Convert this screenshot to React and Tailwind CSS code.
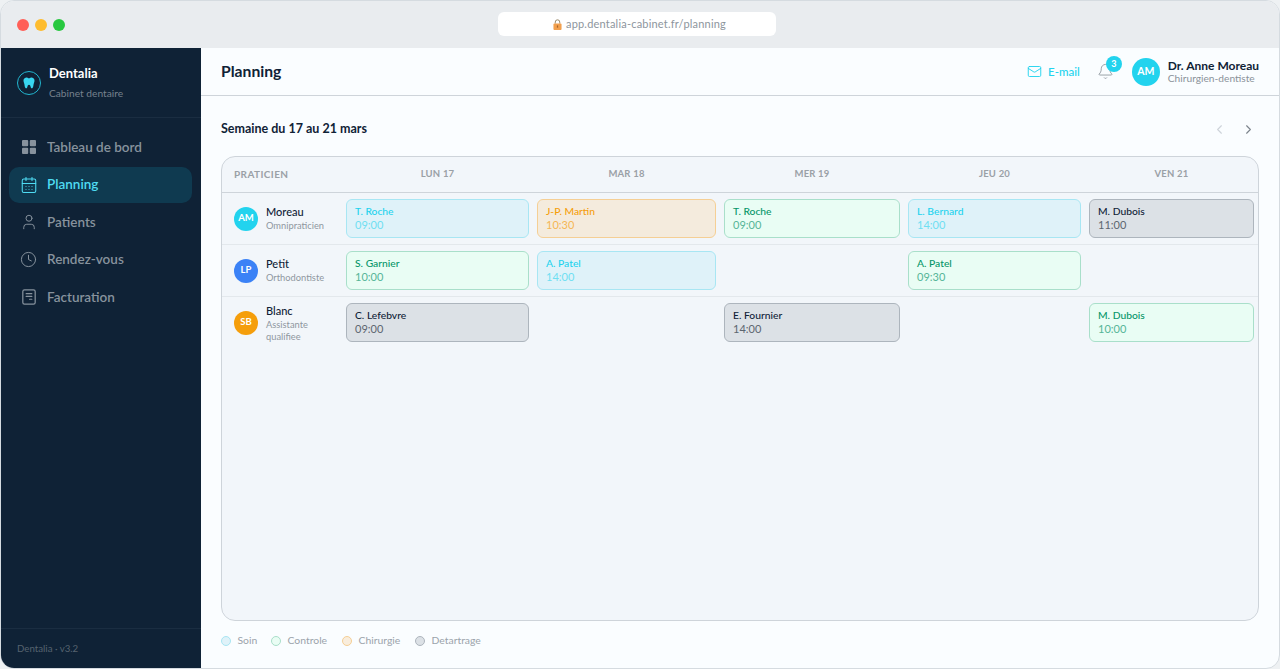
import React from "react";
import { Mail, Bell, ChevronLeft, ChevronRight, User, Clock, CalendarDays } from "lucide-react";

const F = { fontFamily: '"Lato", "Noto Sans", sans-serif' };

const styles = {
  soin: { box: "bg-[#dff2f9] border-[#a8e6f3]", name: "text-[#22d3ee]", time: "text-[#6fdff2]" },
  ctrl: { box: "bg-[#e9fdf4] border-[#a9dfca]", name: "text-[#059669]", time: "text-[#56b598]" },
  chir: { box: "bg-[#f4ebdd] border-[#f5cf95]", name: "text-[#f59e0b]", time: "text-[#f4b654]" },
  det: { box: "bg-[#dce1e6] border-[#adb5bd]", name: "text-[#0f2236]", time: "text-[#5c6670]" },
};

const rows = [
  {
    initials: "AM", color: "bg-[#22d3ee]", name: "Moreau", role: ["Omnipraticien"], text: "",
    cells: [["soin", "T. Roche", "09:00"], ["chir", "J-P. Martin", "10:30"], ["ctrl", "T. Roche", "09:00"], ["soin", "L. Bernard", "14:00"], ["det", "M. Dubois", "11:00"]],
  },
  {
    initials: "LP", color: "bg-[#3b82f6]", name: "Petit", role: ["Orthodontiste"], text: "",
    cells: [["ctrl", "S. Garnier", "10:00"], ["soin", "A. Patel", "14:00"], null, ["ctrl", "A. Patel", "09:30"], null],
  },
  {
    initials: "SB", color: "bg-[#f59e0b]", name: "Blanc", role: ["Assistante", "qualifiee"], text: "pt-[2px]",
    cells: [["det", "C. Lefebvre", "09:00"], null, ["det", "E. Fournier", "14:00"], null, ["ctrl", "M. Dubois", "10:00"]],
  },
];

const grid = "grid grid-cols-[120px_191px_187px_184px_181px_173px]";

function Tooth({ className }) {
  return (
    <svg viewBox="0 0 24 24" className={className} fill="currentColor">
      <path d="M12 5.2C10.4 4.2 8.6 3.6 6.9 4 4.6 4.6 3.4 6.8 3.800 9.4c.3 1.7 1 3 1.3 4.6.3 1.900.5 4.800 2 5.800 1.700.9 2.300-1.400 2.700-3 .3-1.200.7-2.300 2.200-2.300s1.900 1.100 2.200 2.300c.4 1.600 1 3.900 2.700 3 1.500-1 1.700-3.900 2-5.800.3-1.600 1-2.900 1.300-4.600.4-2.600-.8-4.800-3.100-5.400-1.700-.4-3.500.2-5.100 1.200z" />
    </svg>
  );
}

function Grid4({ className }) {
  return (
    <svg viewBox="0 0 14 14" className={className} fill="currentColor">
      <rect x="0" y="0" width="6.2" height="6.2" rx="1" />
      <rect x="7.8" y="0" width="6.2" height="6.2" rx="1" />
      <rect x="0" y="7.800" width="6.2" height="6.2" rx="1" />
      <rect x="7.800" y="7.800" width="6.2" height="6.2" rx="1" />
    </svg>
  );
}

function Bill({ className }) {
  return (
    <svg viewBox="0 0 16 16" className={className} fill="none" stroke="currentColor" strokeWidth="1.100" strokeLinecap="round">
      <rect x="2.500" y="1.700" width="11" height="12.600" rx="1.500" />
      <path d="M5.500 5h5M5.500 7.500h5M8.500 10h2" />
    </svg>
  );
}

function Lock() {
  return (
    <svg viewBox="0 0 10 12" className="w-[9px] h-[11px]">
      <path d="M2.500 5V3.300a2.500 2.500 0 0 1 5 0V5" fill="none" stroke="#9a8a6a" strokeWidth="1.100" />
      <rect x="0.500" y="5" width="9" height="7" rx="1" fill="#f2a04e" />
      <rect x="4.300" y="7" width="1.400" height="2.500" fill="#a8642a" />
    </svg>
  );
}

function NavItem({ icon, label, active }) {
  return (
    <div className={`flex items-center gap-[11px] h-9 px-3 rounded-[10px] text-[13.5px] font-semibold ${active ? "bg-[#0f3a50] text-[#4fdcf3]" : "text-[#87929d]"}`}>
      <span className="w-[15px] shrink-0 flex justify-center">{icon}</span>
      <span>{label}</span>
    </div>
  );
}

function Card({ data }) {
  if (!data) return <div />;
  const s = styles[data[0]];
  return (
    <div className={`h-[39px] border rounded-[6px] pl-2 pt-[4px] leading-[13px] ${s.box}`}>
      <div className={`text-[10.3px] font-medium leading-[14px] ${s.name}`}>{data[1]}</div>
      <div className={`text-[11px] leading-[13px] ${s.time}`}>{data[2]}</div>
    </div>
  );
}

function Legend({ box, label }) {
  return (
    <div className="flex items-center gap-[6.5px]">
      <span className={`w-[10px] h-[10px] shrink-0 rounded-full border ${box}`} />
      <span className="text-[10.4px] text-[#9aa3ab]">{label}</span>
    </div>
  );
}

export default function App() {
  return (
    <div className="w-[1280px] h-[669px] overflow-hidden bg-[#eef1f3]" style={F}>
      <div className="w-full h-full flex flex-col rounded-[14px] border border-[#d5dbe0] overflow-hidden bg-[#fafdff]">
        <div className="relative h-[47px] shrink-0 bg-[#e9ecef] flex items-center px-4 gap-[6px]">
          <span className="w-3 h-3 rounded-full bg-[#ff5f57]" />
          <span className="w-3 h-3 rounded-full bg-[#febc2e]" />
          <span className="w-3 h-3 rounded-full bg-[#28c840]" />
          <div className="absolute left-[497px] top-[11px] w-[278px] h-6 pl-[5px] rounded-[6px] bg-white flex items-center justify-center gap-[4px] text-[11px] tracking-[0.2px] text-[#8d959d]">
            <Lock />
            <span>app.dentalia-cabinet.fr/planning</span>
          </div>
        </div>
        <div className="flex flex-1 min-h-0">
          <aside className="w-[200px] shrink-0 bg-[#0f2236] flex flex-col">
            <div className="h-[70px] border-b border-[#1a2d41] flex items-center px-4 gap-[8px]">
              <div className="w-6 h-6 rounded-full border border-[#22b6cf] flex items-center justify-center text-[#38d6f0]">
                <Tooth className="w-4 h-4" />
              </div>
              <div className="pb-[1px]">
                <div className="text-[13px] leading-[16px] font-bold text-white">Dentalia</div>
                <div className="text-[10.2px] leading-[14px] mt-[5px] text-[#76818d]">Cabinet dentaire</div>
              </div>
            </div>
            <nav className="flex flex-col gap-[1.500px] pl-2 pr-[9px] pt-[11px] flex-1">
              <NavItem icon={<Grid4 className="w-[14px] h-[14px] shrink-0" />} label="Tableau de bord" />
              <NavItem active icon={<CalendarDays className="w-[18px] h-[18px] shrink-0" strokeWidth={1.400} />} label="Planning" />
              <NavItem icon={<User className="w-[18px] h-[18px] shrink-0" strokeWidth={1.300} />} label="Patients" />
              <NavItem icon={<Clock className="w-[17px] h-[17px] shrink-0" strokeWidth={1.400} />} label="Rendez-vous" />
              <NavItem icon={<Bill className="w-[18px] h-[18px] shrink-0" />} label="Facturation" />
            </nav>
            <div className="h-[40px] border-t border-[#1a2d41] px-4 pt-[12px] text-[9.7px] leading-[14px] text-[#56626f]">Dentalia · v3.2</div>
          </aside>
          <main className="flex-1 min-w-0 flex flex-col">
            <header className="h-[48px] shrink-0 border-b border-[#ced4da] flex items-center pl-5 pr-[20px]">
              <h1 className="text-[15.7px] font-bold text-[#0f2236]">Planning</h1>
              <div className="ml-auto flex items-center">
                <Mail className="w-[15px] h-[15px] text-[#22d3ee]" strokeWidth={1.500} />
                <span className="ml-[6px] text-[11.5px] font-medium text-[#22d3ee]">E-mail</span>
                <div className="relative ml-[18px] mr-[18px] w-[16px] h-[17px] flex justify-center text-[#8a929a]">
                  <Bell className="w-[17px] h-[17px] shrink-0" strokeWidth={1.200} />
                  <span className="absolute left-[8px] top-[-7px] w-4 h-4 rounded-full bg-[#22d3ee] text-white text-[9px] font-bold flex items-center justify-center">3</span>
                </div>
                <span className="w-7 h-7 rounded-full bg-[#22d3ee] text-white text-[10.5px] font-bold flex items-center justify-center">AM</span>
                <div className="ml-[8px]">
                  <div className="text-[12px] leading-[13px] font-bold text-[#0f2236]">Dr. Anne Moreau</div>
                  <div className="text-[10.2px] leading-[12px] text-[#8a929a]">Chirurgien-dentiste</div>
                </div>
              </div>
            </header>
            <div className="flex-1 min-h-0 px-5 flex flex-col">
              <div className="h-[60px] pt-[6px] shrink-0 flex items-center">
                <h2 className="text-[12.5px] font-bold text-[#0f2236]">Semaine du 17 au 21 mars</h2>
                <div className="ml-auto flex items-center gap-[14px] pr-[3px]">
                  <ChevronLeft className="w-[15px] h-[15px] text-[#ced4da]" strokeWidth={1.800} />
                  <ChevronRight className="w-[15px] h-[15px] text-[#7d858d]" strokeWidth={1.800} />
                </div>
              </div>
              <div className="h-[465px] shrink-0 rounded-[14px] border border-[#ced4da] bg-[#f2f6fa] overflow-hidden">
                <div className={`${grid} h-[36px] border-b border-[#ced4da] items-center font-bold text-[#9aa0a6]`}>
                  <div className="pl-3 text-[10px] tracking-[0.4px]">PRATICIEN</div>
                  {["LUN 17", "MAR 18", "MER 19", "JEU 20", "VEN 21"].map((d) => (
                    <div key={d} className="text-center text-[9.5px] tracking-[0.2px]">{d}</div>
                  ))}
                </div>
                {rows.map((r) => (
                  <div key={r.name} className={`${grid} h-[52px] border-b border-[#e3e8ec] last:border-b-transparent items-center`}>
                    <div className="pl-3 flex items-center gap-2">
                      <span className={`w-6 h-6 shrink-0 rounded-full text-white text-[9.500px] font-bold flex items-center justify-center ${r.color}`}>{r.initials}</span>
                      <div className={r.text}>
                        <div className="text-[11px] leading-[14px] -mt-[1px] font-medium text-[#0f2236]">{r.name}</div>
                        {r.role.map((x) => (
                          <div key={x} className="text-[9.3px] leading-[11px] first-of-type:mt-[2px] mt-[1px] text-[#8f979f]">{x}</div>
                        ))}
                      </div>
                    </div>
                    {r.cells.map((c, i) => (
                      <div key={i} className="px-[4px]"><Card data={c} /></div>
                    ))}
                  </div>
                ))}
              </div>
              <div className="flex items-center gap-[15px] pt-[12px]">
                <div className="w-[35px]"><Legend box="bg-[#dff2f9] border-[#a8e6f3]" label="Soin" /></div>
                <div className="w-[56px]"><Legend box="bg-[#e9fdf4] border-[#a9dfca]" label="Controle" /></div>
                <div className="w-[58px]"><Legend box="bg-[#f9eddc] border-[#f5cf95]" label="Chirurgie" /></div>
                <Legend box="bg-[#dce1e6] border-[#adb5bd]" label="Detartrage" />
              </div>
            </div>
          </main>
        </div>
      </div>
    </div>
  );
}
